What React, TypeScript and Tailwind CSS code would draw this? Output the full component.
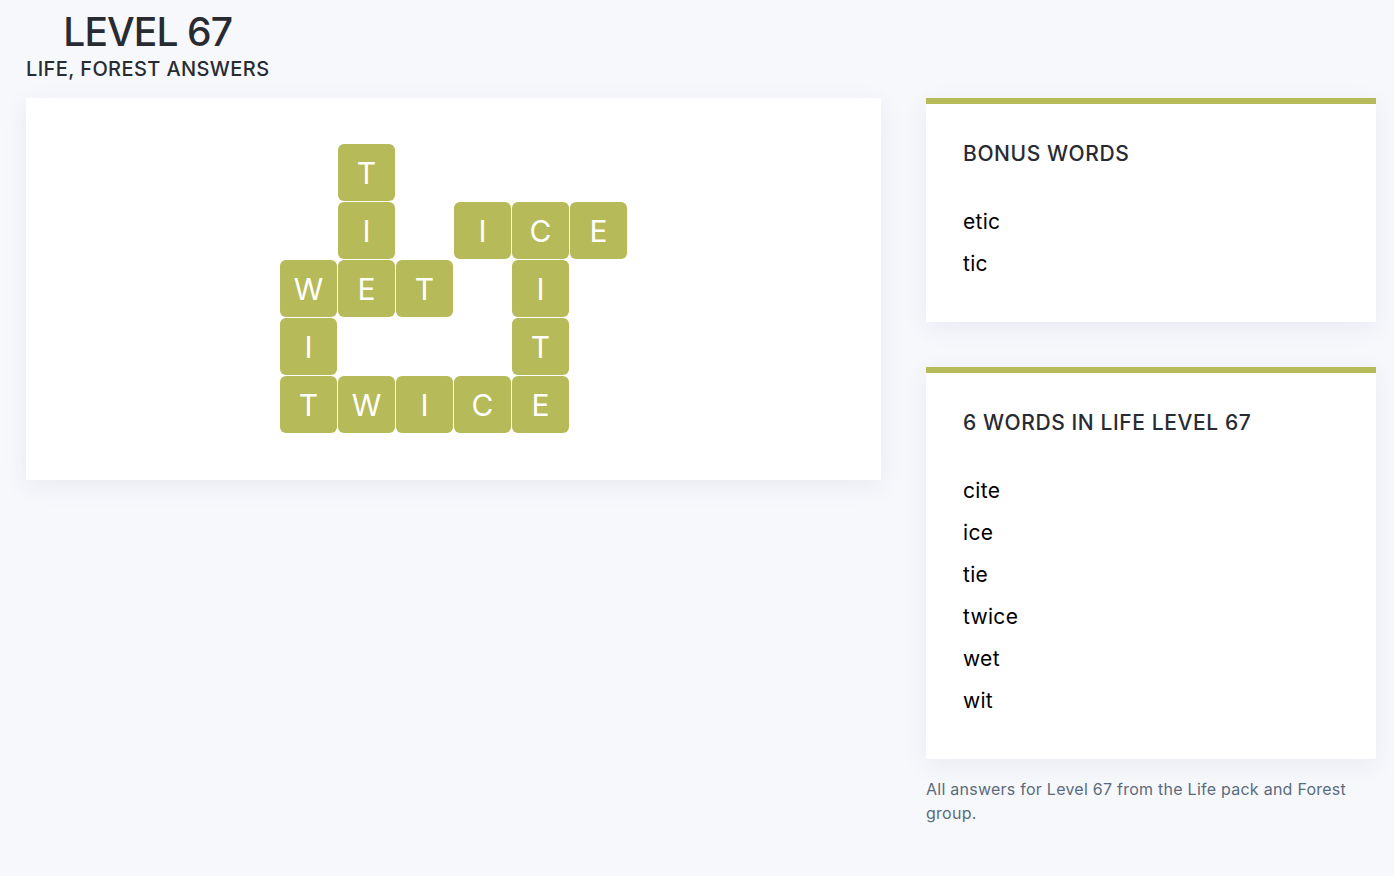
import React from "react";

type Tile = { l: string; c: string; r: string };

const tiles: Tile[] = [
  { l: "T", c: "col-start-2", r: "row-start-1" },
  { l: "I", c: "col-start-2", r: "row-start-2" },
  { l: "I", c: "col-start-4", r: "row-start-2" },
  { l: "C", c: "col-start-5", r: "row-start-2" },
  { l: "E", c: "col-start-6", r: "row-start-2" },
  { l: "W", c: "col-start-1", r: "row-start-3" },
  { l: "E", c: "col-start-2", r: "row-start-3" },
  { l: "T", c: "col-start-3", r: "row-start-3" },
  { l: "I", c: "col-start-5", r: "row-start-3" },
  { l: "I", c: "col-start-1", r: "row-start-4" },
  { l: "T", c: "col-start-5", r: "row-start-4" },
  { l: "T", c: "col-start-1", r: "row-start-5" },
  { l: "W", c: "col-start-2", r: "row-start-5" },
  { l: "I", c: "col-start-3", r: "row-start-5" },
  { l: "C", c: "col-start-4", r: "row-start-5" },
  { l: "E", c: "col-start-5", r: "row-start-5" },
];

function WordCard({ title, words }: { title: string; words: string[] }) {
  return (
    <div className="bg-white border-t-[6px] border-[#b6ba58] shadow-[0_6px_24px_rgba(40,50,90,0.07)] px-[37px] pt-[38px] pb-[37px]">
      <h2 className="text-[21px] leading-[24px] font-medium tracking-[0.6px] text-[#282b31]">{title}</h2>
      <ul className="mt-[35px]">
        {words.map((w) => (
          <li key={w} className="h-[42px] flex items-center text-[21px] tracking-[0.3px] text-black">
            {w}
          </li>
        ))}
      </ul>
    </div>
  );
}

export default function App() {
  return (
    <div
      className="min-h-[876px] bg-[#f7f8fc] text-[#282b31]"
      style={{ fontFamily: "Inter, 'Noto Sans', sans-serif" }}
    >
      <div className="pl-[26px] pr-[18px]">
        <div className="inline-flex flex-col items-center pt-[10px]">
          <h1 className="text-[39px] leading-[44px] font-medium tracking-[-0.9px]">LEVEL 67</h1>
          <div className="text-[20px] leading-[26px] font-medium tracking-[0.4px] mt-[2px]">LIFE, FOREST ANSWERS</div>
        </div>
        <div className="flex items-start gap-[45px] mt-[16px]">
          <div className="w-[855px] bg-white shadow-[0_6px_24px_rgba(40,50,90,0.07)] flex justify-center pt-[46px] pb-[47px]">
            <div className="grid grid-cols-[repeat(6,57px)] grid-rows-[repeat(5,57px)] gap-px">
              {tiles.map((t, i) => (
                <div
                  key={i}
                  className={`${t.c} ${t.r} bg-[#b6ba58] rounded-[6px] flex items-center justify-center text-white text-[30px] leading-none`}
                >
                  {t.l}
                </div>
              ))}
            </div>
          </div>
          <div className="w-[450px] flex flex-col">
            <WordCard title="BONUS WORDS" words={["etic", "tic"]} />
            <div className="mt-[45px]">
              <WordCard
                title="6 WORDS IN LIFE LEVEL 67"
                words={["cite", "ice", "tie", "twice", "wet", "wit"]}
              />
            </div>
            <p className="mt-[18px] text-[16px] leading-[24px] tracking-[0.25px] text-[#5a6b7c]">
              All answers for Level 67 from the Life pack and Forest group.
            </p>
          </div>
        </div>
      </div>
    </div>
  );
}
